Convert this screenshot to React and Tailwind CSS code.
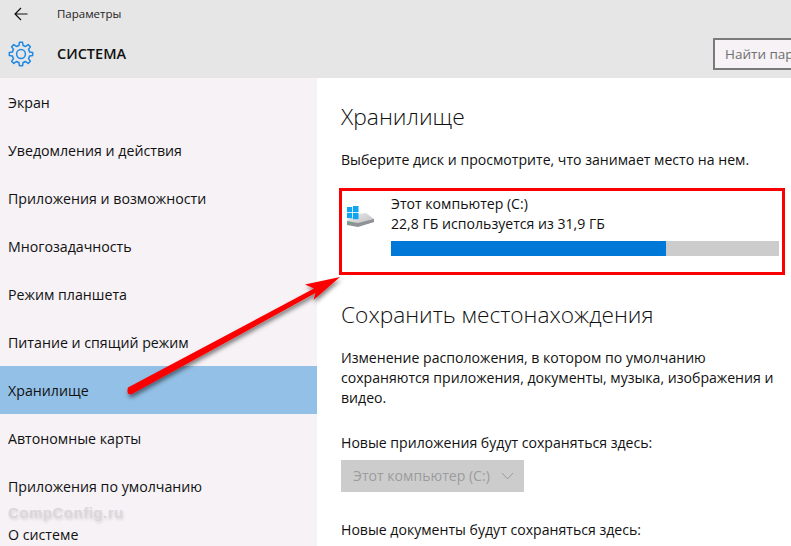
const F = "font-['Open_Sans','Noto_Sans',sans-serif]";

const items = [
  "Экран",
  "Уведомления и действия",
  "Приложения и возможности",
  "Многозадачность",
  "Режим планшета",
  "Питание и спящий режим",
  "Хранилище",
  "Автономные карты",
  "Приложения по умолчанию",
  "О системе",
];

function gearPath(cx, cy, ro, ri, n) {
  const pts = [];
  const step = (Math.PI * 2) / n;
  for (let i = 0; i < n; i++) {
    const a = i * step - Math.PI / 2;
    const w = step * 0.17;
    const v = step * 0.3;
    const p = (r, t) => `${(cx + r * Math.cos(t)).toFixed(2)} ${(cy + r * Math.sin(t)).toFixed(2)}`;
    pts.push(`${i ? "L" : "M"}${p(ri, a - v)}`, `L${p(ro, a - w)}`, `L${p(ro, a + w)}`, `L${p(ri, a + v)}`);
    pts.push(`A${ri} ${ri} 0 0 1 ${p(ri, a + step - v)}`);
  }
  return pts.join(" ") + "Z";
}

function Gear() {
  return (
    <svg width="26" height="26" viewBox="0 0 26 26" fill="none" stroke="#1e88e5" strokeWidth="1.5" strokeLinejoin="round">
      <path d={gearPath(13, 13, 11.8, 8.8, 8)} />
      <circle cx="13" cy="13" r="4.4" />
    </svg>
  );
}

function DriveIcon() {
  return (
    <svg width="30" height="22" viewBox="0 0 30 22">
      <defs>
        <linearGradient id="top" x1="0" y1="0" x2="1" y2="1">
          <stop offset="0" stopColor="#ececec" />
          <stop offset="1" stopColor="#bdbdbd" />
        </linearGradient>
      </defs>
      <path d="M1 14 L12 8 L20 7 L28 13 L28 16 L12 20 L1 18Z" fill="url(#top)" />
      <path d="M1 15 L12 17 L28 13 L28 16 L12 21 L1 19Z" fill="#8f9296" />
      <rect x="3" y="16.2" width="2" height="1.2" fill="#35c46b" />
      <rect x="1" y="1" width="5.2" height="5.2" fill="#10a5ee" />
      <rect x="7" y="0" width="5.5" height="6.2" fill="#10a5ee" />
      <rect x="1" y="7" width="5.2" height="5.2" fill="#10a5ee" />
      <rect x="7" y="7" width="5.5" height="6.2" fill="#10a5ee" />
    </svg>
  );
}

function Arrow() {
  return (
    <svg className="absolute left-0 top-0 pointer-events-none" width="791" height="546" viewBox="0 0 791 546">
      <defs>
        <filter id="sh" x="-10%" y="-10%" width="125%" height="125%">
          <feDropShadow dx="1" dy="3" stdDeviation="2.2" floodColor="#000" floodOpacity="0.5" />
        </filter>
      </defs>
      <path
        d="M128 387.5 L314 288.5 L305 284.5 L340 277 L313.5 300 L315.5 293 L131 394.5 Q126 394.5 128 387.5Z"
        fill="#fb0000"
        filter="url(#sh)"
      />
    </svg>
  );
}

export default function App() {
  return (
    <div className={`relative w-[791px] h-[546px] overflow-hidden bg-white text-[#111] ${F}`}>
      <header className="h-[78px] bg-[#e6e6e6] flex flex-col">
        <div className="h-[28px] flex items-center">
          <svg className="ml-[14px]" width="14" height="14" viewBox="0 0 14 14" fill="none" stroke="#111" strokeWidth="1.2">
            <path d="M1 7 H13.5 M7 1 L1 7 L7 13" />
          </svg>
          <span className="ml-[29px] text-[11.5px] text-[#222]">Параметры</span>
        </div>
        <div className="flex items-center h-[50px] pt-[2px]">
          <div className="ml-2 w-[26px] h-[26px]">
            <Gear />
          </div>
          <span className="ml-[23px] text-[14.5px] font-semibold">СИСТЕМА</span>
          <div className="ml-auto w-[78px] h-[32px] overflow-hidden border-2 border-r-0 border-[#7a7a7a] bg-[#f6f2f6] flex items-center pl-[10px] text-[13.5px] text-[#6f6f6f] whitespace-nowrap">
            Найти параметр
          </div>
        </div>
      </header>
      <div className="flex h-[468px]">
        <nav className="w-[317px] bg-[#f6f2f6] flex flex-col overflow-hidden shrink-0">
          {items.map((t) => (
            <div
              key={t}
              className={`h-[48px] shrink-0 flex items-center pl-2 pt-[2px] text-[14.2px] ${t === "Хранилище" ? "bg-[#93c0e6]" : ""}`}
            >
              {t}
            </div>
          ))}
        </nav>
        <main className="flex-1 pl-6 pt-[23px]">
          <h1 className="text-[22.8px] leading-[32px] font-light">Хранилище</h1>
          <p className="mt-[17px] text-[14.1px] leading-[20px]">Выберите диск и просмотрите, что занимает место на нем.</p>
          <div className="mt-[18px] w-[446px] h-[87px] -ml-[2px] border-[3px] border-[#fb0000] flex pl-[4px] pt-[3px] pr-[3px]">
            <div className="mt-[12px] w-[45px] shrink-0">
              <DriveIcon />
            </div>
            <div className="flex-1">
              <div className="text-[14.1px] leading-[19px] mb-[1px]">Этот компьютер (C:)</div>
              <div className="text-[14.1px] leading-[20px]">22,8 ГБ используется из 31,9 ГБ</div>
              <div className="mt-[7px] h-[15px] bg-[#cccccc]">
                <div className="h-full w-[71%] bg-[#0078d7]" />
              </div>
            </div>
          </div>
          <h2 className="mt-[24px] text-[22.7px] leading-[32px] font-light">Сохранить местонахождения</h2>
          <p className="mt-[17px] text-[14.1px] leading-[20px] w-[440px]">
            Изменение расположения, в котором по умолчанию сохраняются приложения, документы, музыка, изображения и видео.
          </p>
          <p className="mt-[25px] text-[14.1px] leading-[20px]">Новые приложения будут сохраняться здесь:</p>
          <div className="mt-[7px] w-[183px] h-[32px] bg-[#cccccc] flex items-center pl-3 text-[14.1px] text-[#9c9c9c]">
            Этот компьютер (C:)
            <svg className="ml-[11px]" width="13" height="8" viewBox="0 0 13 8" fill="none" stroke="#9c9c9c" strokeWidth="1">
              <path d="M1 1 L6.5 7 L12 1" />
            </svg>
          </div>
          <p className="mt-[28px] text-[14.1px] leading-[20px]">Новые документы будут сохраняться здесь:</p>
        </main>
      </div>
      <Arrow />
      <div className="absolute left-2 top-[502px] text-[15px] font-bold tracking-[0.5px] text-[#dbd8db] [text-shadow:1px_2px_3px_rgba(0,0,0,0.12)] font-['Liberation_Sans',sans-serif]">
        CompConfig.ru
      </div>
    </div>
  );
}
